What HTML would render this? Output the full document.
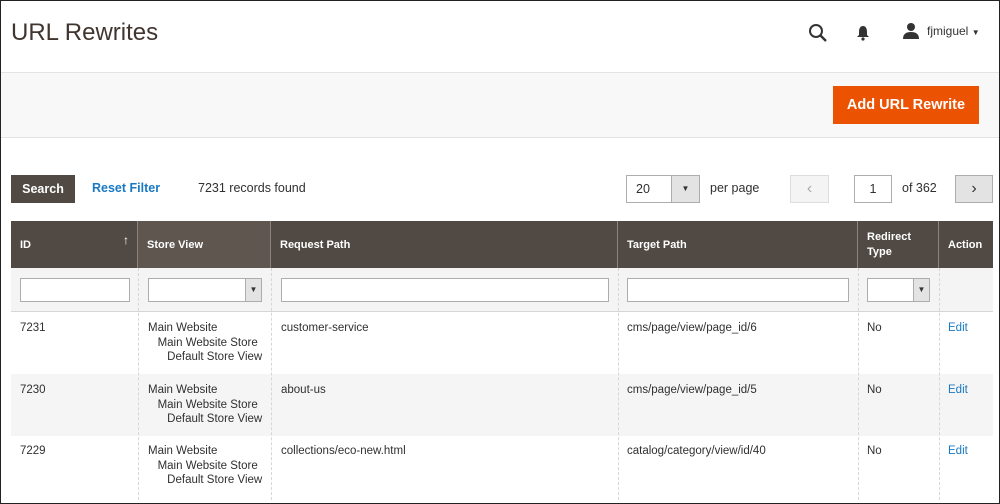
<!DOCTYPE html>
<html><head><style>
*{box-sizing:border-box;margin:0;padding:0}
body{width:1000px;height:504px;overflow:hidden;background:#fff;font-family:"Liberation Sans",sans-serif;color:#303030;position:relative}
.a{position:absolute}
.t{font-size:12px}
.inp{position:absolute;border:1px solid #adadad;background:#fff;height:24px}
.dd{position:absolute;top:0;right:0;width:16px;height:22px;background:#e3e3e3;border-left:1px solid #adadad;font-size:8px;text-align:center;line-height:22px;color:#333}
.th{position:absolute;top:221px;height:47px;color:#fff;font-weight:bold;font-size:11px;padding:0 9px;display:flex;align-items:center;border-right:1px solid #8a837f}
.vl{position:absolute;top:268px;height:232px;border-left:1px dashed #d6d6d6}
.cell{position:absolute;font-size:11.5px;color:#303030;line-height:14.5px}
</style></head><body>
<div class="a" style="left:11px;top:19px;font-size:24px;color:#41362f">URL Rewrites</div>
<svg class="a" style="left:808px;top:23px" width="20" height="20" viewBox="0 0 20 20"><circle cx="8" cy="8" r="6" fill="none" stroke="#333" stroke-width="2"/><line x1="12.5" y1="12.5" x2="18" y2="18" stroke="#333" stroke-width="2.4"/></svg>
<svg class="a" style="left:856px;top:25px" width="14" height="16" viewBox="0 0 14 16"><path d="M7 1C4 1 3 4 3 7v3L1 12h12l-2-2V7c0-3-1-6-4-6z" fill="#333"/><circle cx="7" cy="14" r="1.6" fill="#333"/></svg>
<svg class="a" style="left:902px;top:22px" width="18" height="18" viewBox="0 0 18 18"><circle cx="9" cy="5" r="4" fill="#333"/><path d="M1 17c0-5 3-7 8-7s8 2 8 7z" fill="#333"/></svg>
<div class="a t" style="left:927px;top:24px;color:#333">fjmiguel <span style="font-size:8px">▼</span></div>
<div class="a" style="left:0;top:72px;width:1000px;height:66px;background:#f8f8f8;border-top:1px solid #e3e3e3;border-bottom:1px solid #e3e3e3"></div>
<div class="a" style="left:833px;top:86px;width:146px;height:38px;background:#eb5202;color:#fff;font-weight:bold;font-size:14.5px;text-align:center;line-height:38px">Add URL Rewrite</div>
<div class="a" style="left:11px;top:175px;width:64px;height:28px;background:#514943;color:#fff;font-weight:bold;font-size:12.5px;text-align:center;line-height:28px">Search</div>
<div class="a" style="left:92px;top:181px;color:#1979c3;font-weight:bold;font-size:12.5px">Reset Filter</div>
<div class="a" style="left:198px;top:181px;font-size:12.5px">7231 records found</div>
<div class="inp" style="left:626px;top:175px;width:74px;height:28px"><span style="position:absolute;left:9px;top:6px;font-size:12.5px">20</span><div class="dd" style="width:28px;height:26px;line-height:26px">▼</div></div>
<div class="a" style="left:710px;top:181px;font-size:12.5px">per page</div>
<div class="a" style="left:790px;top:175px;width:39px;height:28px;background:#f4f4f4;border:1px solid #ddd;text-align:center;line-height:26px;color:#aaa;font-size:16px">‹</div>
<div class="inp" style="left:854px;top:175px;width:38px;height:28px;text-align:center;line-height:26px;font-size:12.5px">1</div>
<div class="a" style="left:902px;top:181px;font-size:12.5px">of 362</div>
<div class="a" style="left:955px;top:175px;width:38px;height:28px;background:#e3e3e3;border:1px solid #adadad;text-align:center;line-height:25px;color:#333;font-size:16px">›</div>
<div class="a" style="left:11px;top:221px;width:982px;height:47px;background:#514943"></div>
<div class="th" style="left:11px;width:127px">ID<span style="position:absolute;right:8px;top:12px;font-size:12px">↑</span></div>
<div class="th" style="left:138px;width:133px;background:#5f564f">Store View</div>
<div class="th" style="left:271px;width:347px">Request Path</div>
<div class="th" style="left:618px;width:240px">Target Path</div>
<div class="th" style="left:858px;width:81px;line-height:15px">Redirect<br>Type</div>
<div class="th" style="left:939px;width:54px;border:none">Action</div>
<div class="a" style="left:11px;top:268px;width:982px;height:44px;background:#f4f4f4;border-bottom:1px solid #d6d6d6"></div>
<div class="a" style="left:11px;top:374px;width:982px;height:62px;background:#f5f5f5"></div>
<div class="vl" style="left:138px"></div><div class="vl" style="left:271px"></div><div class="vl" style="left:618px"></div><div class="vl" style="left:858px"></div><div class="vl" style="left:939px"></div>
<div class="inp" style="left:20px;top:278px;width:110px"></div>
<div class="inp" style="left:148px;top:278px;width:114px"><div class="dd">▼</div></div>
<div class="inp" style="left:281px;top:278px;width:328px"></div>
<div class="inp" style="left:627px;top:278px;width:222px"></div>
<div class="inp" style="left:867px;top:278px;width:63px"><div class="dd">▼</div></div>
<div class="cell" style="left:20px;top:321px">7231</div>
<div class="cell" style="left:148px;top:321px">Main Website<br>&nbsp;&nbsp;&nbsp;Main Website Store<br>&nbsp;&nbsp;&nbsp;&nbsp;&nbsp;&nbsp;Default Store View</div>
<div class="cell" style="left:281px;top:321px">customer-service</div>
<div class="cell" style="left:627px;top:321px">cms/page/view/page_id/6</div>
<div class="cell" style="left:867px;top:321px">No</div>
<div class="cell" style="left:948px;top:321px;color:#1979c3">Edit</div>
<div class="cell" style="left:20px;top:383px">7230</div>
<div class="cell" style="left:148px;top:383px">Main Website<br>&nbsp;&nbsp;&nbsp;Main Website Store<br>&nbsp;&nbsp;&nbsp;&nbsp;&nbsp;&nbsp;Default Store View</div>
<div class="cell" style="left:281px;top:383px">about-us</div>
<div class="cell" style="left:627px;top:383px">cms/page/view/page_id/5</div>
<div class="cell" style="left:867px;top:383px">No</div>
<div class="cell" style="left:948px;top:383px;color:#1979c3">Edit</div>
<div class="cell" style="left:20px;top:444px">7229</div>
<div class="cell" style="left:148px;top:444px">Main Website<br>&nbsp;&nbsp;&nbsp;Main Website Store<br>&nbsp;&nbsp;&nbsp;&nbsp;&nbsp;&nbsp;Default Store View</div>
<div class="cell" style="left:281px;top:444px">collections/eco-new.html</div>
<div class="cell" style="left:627px;top:444px">catalog/category/view/id/40</div>
<div class="cell" style="left:867px;top:444px">No</div>
<div class="cell" style="left:948px;top:444px;color:#1979c3">Edit</div>
<div class="a" style="left:0;top:0;width:1000px;height:504px;border:1px solid #222;pointer-events:none"></div>
</body></html>
